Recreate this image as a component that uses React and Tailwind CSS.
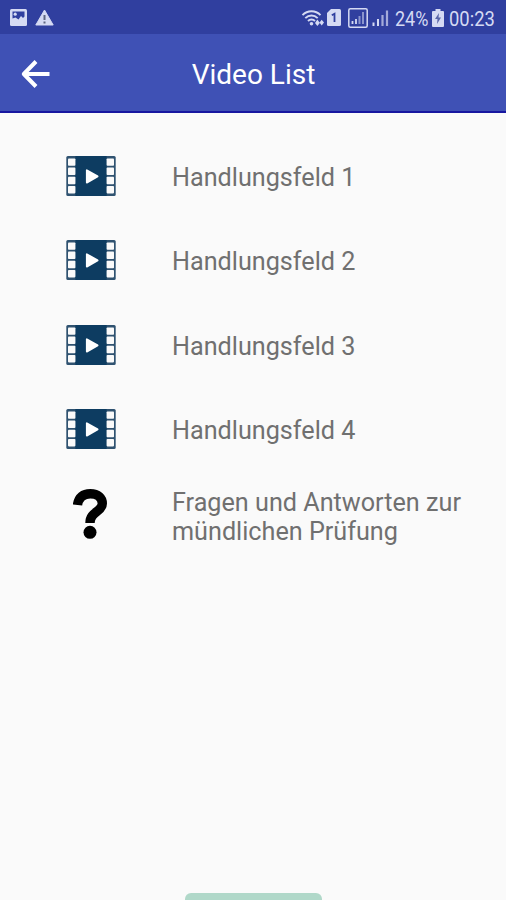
import React from 'react';

const videos = [
  { id: 1, title: 'Handlungsfeld 1', type: 'video' },
  { id: 2, title: 'Handlungsfeld 2', type: 'video' },
  { id: 3, title: 'Handlungsfeld 3', type: 'video' },
  { id: 4, title: 'Handlungsfeld 4', type: 'video' },
  { id: 5, title: 'Fragen und Antworten zur mündlichen Prüfung', type: 'question' },
];

function FilmIcon() {
  const holes = [2.4, 11.6, 20.8, 30];

  return (
    <svg width="50" height="40" viewBox="0 0 50 40">
      <rect x="0.3" width="49.4" height="40" rx="1.5" fill="#2f5270" />
      <rect x="9.4" width="31.2" height="40" fill="#0d3c61" />
      {holes.map((y) => (
        <g key={y} fill="#fafafa">
          <rect x="2" y={y} width="7.4" height="7.4" rx="0.8" />
          <rect x="40.6" y={y} width="7.4" height="7.4" rx="0.8" />
        </g>
      ))}
      <path
        d="M20.8 14.2v12.4L31.6 20.4z"
        fill="white"
        stroke="white"
        strokeWidth="1.8"
        strokeLinejoin="round"
      />
    </svg>
  );
}

function QuestionIcon() {
  return (
    <svg width="34" height="50" viewBox="0 0 34 50" className="mr-[2px] mt-[2px]">
      <path
        d="M4.5 16C5.5 8 10.5 4.7 17.3 4.7C25 4.7 29.3 9 29.3 14.6C29.3 23 17 22.5 17 34"
        fill="none"
        stroke="black"
        strokeWidth="9.4"
      />
      <circle cx="17" cy="43.3" r="6.5" fill="black" />
    </svg>
  );
}

function StatusBar() {
  return (
    <div className="flex h-[34px] items-center bg-[#303f9f] pl-[10px] pr-[10px] pt-[1px] text-[#d5daf3]">
      {/* Notifications */}
      <svg width="17" height="17" viewBox="0 0 17 17">
        <rect width="17" height="17" rx="1.5" fill="currentColor" />
        <path d="M2.5 2.5h12v5l-1.5 1.5-2-2-2.5 3.5-3-2-3 1z" fill="#303f9f" />
        <circle cx="5.2" cy="5.2" r="1.6" fill="currentColor" />
      </svg>
      <svg width="19" height="17" viewBox="0 0 19 17" className="ml-[8px]">
        <path d="M9.5 1L18.2 16H0.8z" fill="currentColor" stroke="currentColor" strokeLinejoin="round" />
        <path d="M9.5 6v5M9.5 12.5v2" stroke="#5f6681" strokeWidth="2" />
      </svg>

      {/* Connectivity */}
      <svg width="24" height="18" viewBox="0 0 23 18" className="ml-auto" fill="none" stroke="currentColor">
        <path d="M1 6.2C6 1 14 1 19 6.2M3.8 9.2C7.5 5.5 12.5 5.5 16.2 9.2M6.5 12C8.5 10 11.5 10 13.5 12" strokeWidth="1.9" />
        <circle cx="10" cy="14.7" r="1.8" fill="currentColor" stroke="none" />
        <path d="M13.5 14l2.4-3.5 2.4 3.5-2.4 3zM18 13.5l2.2-2.8 2.3 2.8-2.3 3z" fill="currentColor" stroke="none" />
      </svg>
      <svg width="14" height="17" viewBox="0 0 14 17" className="ml-[2px]">
        <path d="M4 0h8.5Q14 0 14 1.5v14Q14 17 12.5 17h-11Q0 17 0 15.5V4z" fill="currentColor" />
        <path d="M4.8 6.2L7.5 4.7V13" fill="none" stroke="#303f9f" strokeWidth="1.8" />
      </svg>
      <svg width="20" height="20" viewBox="0 0 20 20" className="ml-[7px]" fill="none" stroke="currentColor">
        <rect x="0.8" y="0.8" width="18.4" height="18.4" rx="1.5" strokeWidth="1.5" />
        <path d="M4.5 16v-3M8 16v-5" strokeWidth="1.8" />
        <path d="M11.5 16V8M15 16V4" strokeWidth="2" opacity="0.55" />
      </svg>
      <svg width="17" height="18" viewBox="0 0 17 18" className="ml-[4px]" fill="none" stroke="currentColor">
        <path d="M1.5 17v-3.5M6 17v-7" strokeWidth="2" />
        <path d="M10.5 17V6M15 17V1.5" strokeWidth="2.2" opacity="0.7" />
      </svg>
      <span className="ml-[6px] flex w-[35px] whitespace-nowrap pt-[2px]">
        <span className="origin-left scale-x-[0.9] text-[20px] leading-none">24%</span>
      </span>
      <svg width="12" height="18" viewBox="0 0 12 18" className="ml-[2px]">
        <path d="M3.5 0h5v2H11Q12 2 12 3v14Q12 18 11 18H1Q0 18 0 17V3Q0 2 1 2h2.5z" fill="currentColor" />
        <path d="M7 4L3 10h2.5L5 15l4-6.5H6.5z" fill="#5965a8" />
      </svg>
      <span className="ml-[5px] flex w-[47px] whitespace-nowrap pt-[2px]">
        <span className="origin-left scale-x-[0.92] text-[20px] leading-none">00:23</span>
      </span>
    </div>
  );
}

function Header() {
  return (
    <header className="flex h-[79px] items-center border-b-2 border-[#1717a0] bg-[#3f51b5] px-[21px] text-white">
      <svg width="30" height="28" viewBox="0 0 30 28" fill="none" stroke="currentColor" strokeWidth="4" strokeLinejoin="round" className="mt-[2px]">
        <path d="M28.5 14H4M15 1.5L2.8 14L15 26.5" />
      </svg>
      <h1 className="mt-[5px] flex-1 pr-[29px] text-center text-[28px] leading-none">Video List</h1>
    </header>
  );
}

export default function App() {
  return (
    <div className="flex h-[900px] w-[506px] flex-col overflow-hidden bg-[#fafafa] font-[Roboto,sans-serif]">
      <StatusBar />
      <Header />

      <ul className="flex-1 pt-[21px]">
        {videos.map((video) => (
          <li key={video.id} className="flex h-[84.3px] items-center">
            <div className="ml-[66px] flex w-[50px] justify-center">
              {video.type === 'video' ? <FilmIcon /> : <QuestionIcon />}
            </div>
            <p
              className={`ml-[56px] w-[310px] text-[25.2px] leading-[29px] text-[#707070] ${
                video.type === 'video' ? 'pt-[3px]' : 'pt-[7px]'
              }`}
            >
              {video.title}
            </p>
          </li>
        ))}
      </ul>

      {/* Bottom sheet handle */}
      <div className="mx-auto h-[7px] w-[137px] rounded-t-[6px] bg-[#b0d8c9]" />
    </div>
  );
}
